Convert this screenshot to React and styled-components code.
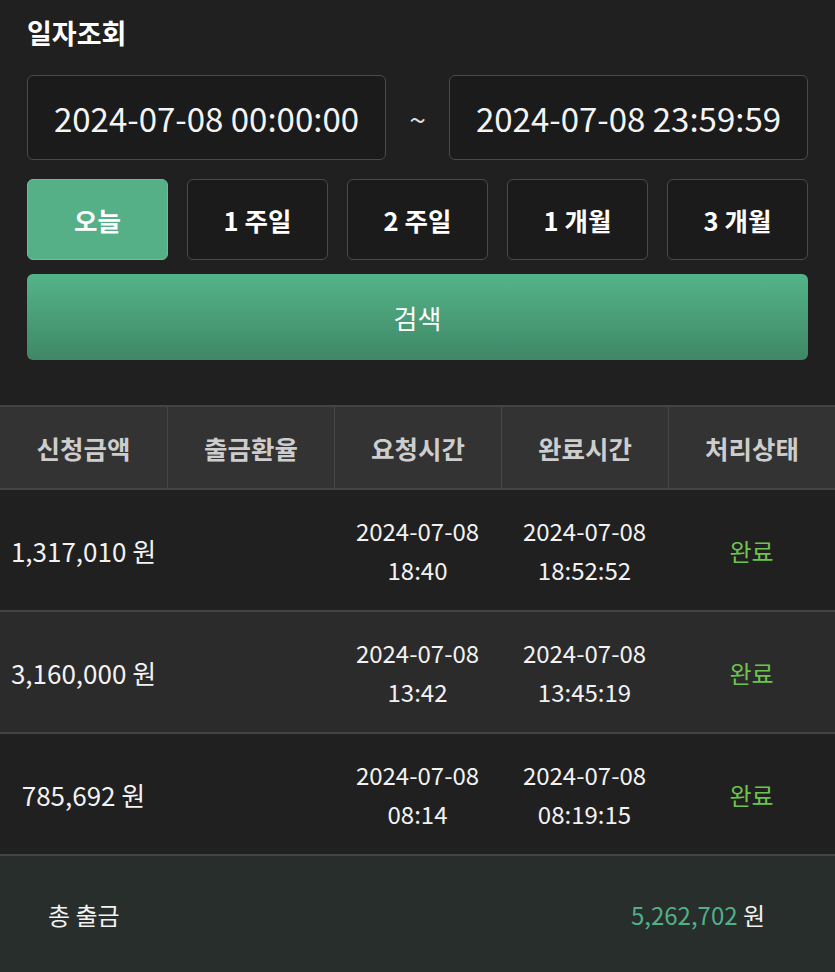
import React from 'react';
import styled, { createGlobalStyle } from 'styled-components';

const GlobalStyle = createGlobalStyle`
  html, body {
    margin: 0;
    padding: 0;
    background: #202020;
  }
  body {
    font-family: "Noto Sans CJK KR", "Noto Sans", sans-serif;
    color: #fff;
  }
  *, *::before, *::after {
    box-sizing: border-box;
  }
`

const Page = styled.div`
  width: 835px;
  min-height: 972px;
  background: #202020;
`

const SearchPanel = styled.div`
  padding: 15px 27px 45px;
`

const Title = styled.h2`
  margin: 0 0 25px;
  font-size: 27px;
  line-height: 35px;
  font-weight: 700;
  color: #fff;
`

const DateRow = styled.div`
  display: grid;
  grid-template-columns: 359px 1fr 359px;
  align-items: center;
  height: 85px;
`

const DateBox = styled.div`
  height: 85px;
  border: 1.5px solid #4a4a4a;
  border-radius: 6px;
  background: #1b1b1b;
  display: flex;
  align-items: center;
  justify-content: center;
  font-size: 33px;
  color: #f4f4f4;
`

const Tilde = styled.span`
  text-align: center;
  font-size: 30px;
  color: #ddd;
`

const PeriodRow = styled.div`
  display: grid;
  grid-template-columns: repeat(5, 1fr);
  gap: 19px;
  margin-top: 19px;
`

const PeriodButton = styled.button`
  height: 81px;
  border-radius: 6px;
  border: 1.5px solid ${p => (p.$active ? '#6bbf98' : '#4a4a4a')};
  background: ${p => (p.$active ? '#55b088' : '#1b1b1b')};
  color: #fff;
  font-family: inherit;
  font-size: 25.5px;
  font-weight: 700;
  padding: 0;
`

const SearchButton = styled.button`
  display: block;
  width: 100%;
  height: 86px;
  margin-top: 14px;
  border: none;
  border-radius: 6px;
  background: linear-gradient(180deg, #54b489 0%, #3f8766 100%);
  color: #fff;
  font-family: inherit;
  font-size: 26px;
  font-weight: 400;
`

const Table = styled.div`
  width: 835px;
`

const HeaderRow = styled.div`
  display: grid;
  grid-template-columns: repeat(5, 1fr);
  height: 85px;
  background: #333;
  border-top: 2px solid #444;
  border-bottom: 2px solid #444;
`

const HeaderCell = styled.div`
  display: flex;
  align-items: center;
  justify-content: center;
  font-size: 25.5px;
  font-weight: 700;
  color: #cdcdcd;
  border-left: ${p => (p.$first ? 'none' : '1px solid #464646')};
`

const Row = styled.div`
  display: grid;
  grid-template-columns: repeat(5, 1fr);
  height: 122px;
  background: ${p => (p.$alt ? '#2b2b2b' : '#202020')};
  border-bottom: 2px solid #444;
`

const Cell = styled.div`
  display: flex;
  flex-direction: column;
  align-items: center;
  justify-content: center;
  text-align: center;
  font-size: ${p => (p.$amount ? '26px' : '24px')};
  line-height: 39px;
  color: ${p => (p.$status ? '#6cc44d' : '#f2f2f2')};
`

const Footer = styled.div`
  display: flex;
  align-items: center;
  justify-content: space-between;
  height: 116px;
  padding: 0 70px 0 48px;
  background: #272e2c;
  font-size: 24px;
  color: #f2f2f2;
`

const Total = styled.span`
  color: #52b087;
`

const rows = [
  { amount: '1,317,010 원', req: ['2024-07-08', '18:40'], done: ['2024-07-08', '18:52:52'] },
  { amount: '3,160,000 원', req: ['2024-07-08', '13:42'], done: ['2024-07-08', '13:45:19'] },
  { amount: '785,692 원', req: ['2024-07-08', '08:14'], done: ['2024-07-08', '08:19:15'] },
]

const periods = ['오늘', '1 주일', '2 주일', '1 개월', '3 개월']
const headers = ['신청금액', '출금환율', '요청시간', '완료시간', '처리상태']

const App = () => {
  return (
    <Page>
      <GlobalStyle />
      <SearchPanel>
        <Title>일자조회</Title>
        <DateRow>
          <DateBox>2024-07-08 00:00:00</DateBox>
          <Tilde>~</Tilde>
          <DateBox>2024-07-08 23:59:59</DateBox>
        </DateRow>
        <PeriodRow>
          {periods.map((p, i) => (
            <PeriodButton key={p} $active={i === 0}>{p}</PeriodButton>
          ))}
        </PeriodRow>
        <SearchButton>검색</SearchButton>
      </SearchPanel>
      <Table>
        <HeaderRow>
          {headers.map((h, i) => (
            <HeaderCell key={h} $first={i === 0}>{h}</HeaderCell>
          ))}
        </HeaderRow>
        {rows.map((r, i) => (
          <Row key={r.amount} $alt={i === 1}>
            <Cell $amount>{r.amount}</Cell>
            <Cell />
            <Cell>
              <span>{r.req[0]}</span>
              <span>{r.req[1]}</span>
            </Cell>
            <Cell>
              <span>{r.done[0]}</span>
              <span>{r.done[1]}</span>
            </Cell>
            <Cell $status>완료</Cell>
          </Row>
        ))}
        <Footer>
          <span>총 출금</span>
          <span>
            <Total>5,262,702</Total> 원
          </span>
        </Footer>
      </Table>
    </Page>
  )
}

export default App;
